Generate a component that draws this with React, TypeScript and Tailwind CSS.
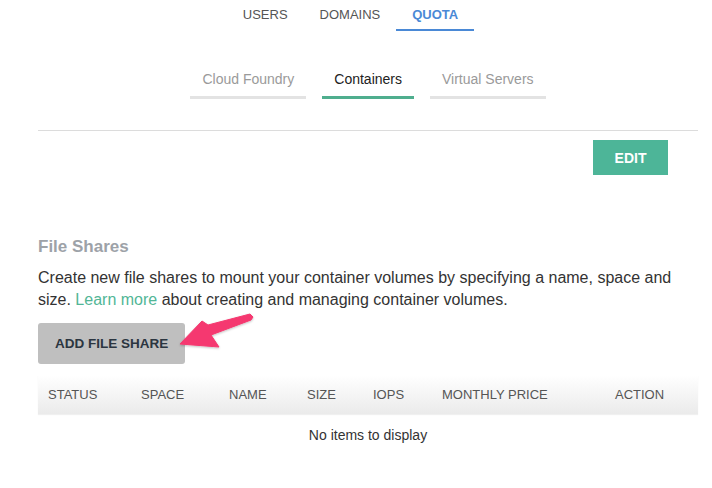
export default function App() {
  const cols: { label: string; w: string }[] = [
    { label: "STATUS", w: "w-[93px]" },
    { label: "SPACE", w: "w-[88px]" },
    { label: "NAME", w: "w-[78px]" },
    { label: "SIZE", w: "w-[66px]" },
    { label: "IOPS", w: "w-[69px]" },
    { label: "MONTHLY PRICE", w: "w-[173px]" },
    { label: "ACTION", w: "flex-1" },
  ];
  return (
    <div className="relative w-[712px] h-[488px] bg-white overflow-hidden font-['Liberation_Sans',Arial,sans-serif]">
      <div className="pl-[38px] pr-[14px]">
        <nav className="flex justify-center pr-[35px]">
          <div className="px-4 pt-[7px] pb-[6px] text-[13px] leading-[16px] text-[#555] border-b-2 border-transparent">USERS</div>
          <div className="px-4 pt-[7px] pb-[6px] text-[13px] leading-[16px] text-[#555] border-b-2 border-transparent">DOMAINS</div>
          <div className="px-4 pt-[7px] pb-[6px] text-[13px] leading-[16px] font-bold text-[#4a89d6] border-b-2 border-[#4a89d6]">QUOTA</div>
        </nav>
        <div className="mt-[40px] flex justify-center gap-4">
          <div className="px-3 pb-[9px] text-[14px] leading-[16px] text-[#9a9a9a] border-b-[3px] border-[#e3e3e3]">Cloud Foundry</div>
          <div className="px-3 pb-[9px] text-[14px] leading-[16px] text-[#222] border-b-[3px] border-[#4fae8e]">Containers</div>
          <div className="px-3 pb-[9px] text-[14px] leading-[16px] text-[#9a9a9a] border-b-[3px] border-[#e3e3e3]">Virtual Servers</div>
        </div>
        <div className="mt-[31px] border-t border-[#dcdcdc]" />
        <div className="flex justify-end pr-[30px] mt-[9px]">
          <button className="h-[35px] w-[75px] bg-[#4db598] text-white font-bold text-[14px] leading-[16px]">EDIT</button>
        </div>
        <h2 className="mt-[62px] text-[17px] leading-[20px] font-bold text-[#9da2a8]">File Shares</h2>
        <p className="mt-[10px] text-[16px] leading-[22px] text-[#333]">
          Create new file shares to mount your container volumes by specifying a name, space and size.{" "}
          <span className="text-[#52b696]">Learn more</span> about creating and managing container volumes.
        </p>
        <button className="mt-[12px] h-[41px] px-[17px] rounded-[3px] bg-[#bfbfbf] text-[#2b3540] font-bold text-[13.5px] leading-[16px]">
          ADD FILE SHARE
        </button>
        <div className="mt-[11px] h-[39px] flex items-center pl-[10px] bg-gradient-to-b from-white to-[#ebebeb] shadow-[0_1px_1px_rgba(0,0,0,0.06)]">
          {cols.map((c) => (
            <div key={c.label} className={`${c.w} text-[13px] leading-[16px] text-[#555]`}>
              {c.label}
            </div>
          ))}
        </div>
        <div className="mt-[11px] text-center text-[14px] leading-[20px] text-[#333]">No items to display</div>
      </div>
      <svg className="absolute left-0 top-0 pointer-events-none" width="712" height="488" viewBox="0 0 712 488">
        <defs>
          <filter id="sh" x="-20%" y="-20%" width="140%" height="140%">
            <feDropShadow dx="0" dy="1" stdDeviation="1.2" floodColor="#000" floodOpacity="0.25" />
          </filter>
        </defs>
        <polygon
          points="180,344 202,321 208,325 250,314 253,317 251,320 211,335 219,347"
          fill="#f5386f"
          stroke="#f5386f"
          strokeWidth="1"
          strokeLinejoin="round"
          filter="url(#sh)"
        />
      </svg>
    </div>
  );
}
